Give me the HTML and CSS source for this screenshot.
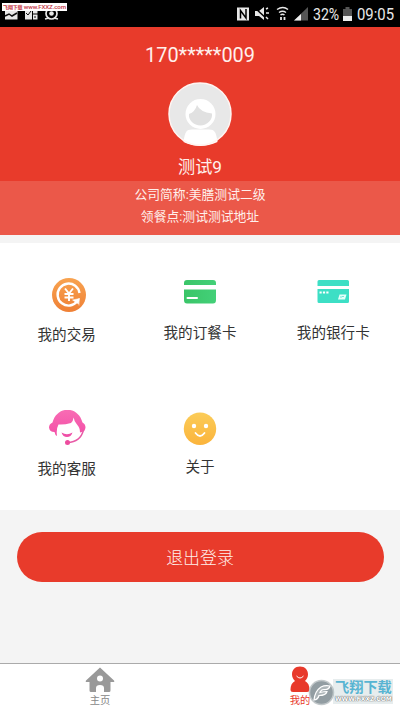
FILE: index.html
```html
<!DOCTYPE html>
<html lang="zh-CN">
<head>
<meta charset="utf-8">
<title>我的</title>
<link rel="stylesheet" href="styles.css">
</head>
<body>
<div class="screen">
  <div class="status">
    <svg class="notices" width="62" height="27" viewBox="0 0 62 27">
      <path d="M5 9h12.500v10.500H5z" fill="#e8e8e8"/><path d="M5 16l4-2 3 2 5-3" stroke="#111" stroke-width="1.500" fill="none"/>
      <path d="M25 9h7v10.500h-7zM33 9h4.500v4.500H33zM33 14.500h4.500v5H33z" fill="#e8e8e8"/><path d="M26 13l2 2 3-4M34 17h2" stroke="#111" fill="none"/>
      <circle cx="51.500" cy="13.500" r="5.500" fill="none" stroke="#e8e8e8" stroke-width="1.700"/><circle cx="51.500" cy="13.500" r="2.300" fill="#e8e8e8"/><path d="M45 19l4-1M58 19l-4-1" stroke="#e8e8e8" stroke-width="1.500"/>
    </svg>
    <div class="indicators">
      <svg width="76" height="27" viewBox="0 0 76 27">
        <path d="M1 7.500h12v13H1z" fill="#e8e8e8"/><path d="M4.500 18.500V10.500L10 18V9" fill="none" stroke="#000" stroke-width="1.500"/>
        <path d="M19 11h4l5-4v13l-5-4h-4z" fill="#e8e8e8"/><path d="M19 8l12 11" stroke="#000" stroke-width="1.500"/><path d="M30 9l2-1M30 13h3M30 17l2 2" stroke="#e8e8e8" stroke-width="1.500"/>
        <path d="M41 9.500q6-4 11 0M43 12.500q3.500-2.500 7 0M44.500 15q2-1.500 4 0" fill="none" stroke="#e8e8e8" stroke-width="1.500"/><path d="M45 17v3M48.500 17v3" stroke="#e8e8e8" stroke-width="1.800"/>
        <path d="M58 20.500L72 7v13.500z" fill="#555"/><path d="M58 20.500l7-6.500v6.500z" fill="#eee"/>
      </svg>
      <span class="percent">32%</span>
      <svg class="battery" width="9" height="14" viewBox="0 0 9 14"><path d="M2.500 0h4v2H9v12H0V2h2.500z" fill="#555"/><path d="M0 9h9v5H0z" fill="#eee"/></svg>
      <span class="clock">09:05</span>
    </div>
    <div class="source"><b>飞翔下载</b> www.FXXZ.com</div>
  </div>

  <header class="profile">
    <div class="phone">170*****009</div>
    <svg class="avatar" width="64" height="64" viewBox="0 0 64 64">
      <circle cx="32" cy="32" r="31" fill="#e8e8e8"/>
      <path d="M15.500 60C17 50 18 47.500 24 47.500h17c6 0 7 3 8.500 12.500Q32 68 15.500 60z" fill="#fff"/>
      <circle cx="32.500" cy="32" r="15" fill="#fff"/>
      <path d="M21 32q6-2 8-9 3 7 15 8.500c1 6-5 12-11.500 12S20 38 21 32z" fill="#e1e1e1"/>
      <circle cx="32" cy="32" r="31" fill="none" stroke="#fff5f2" stroke-width="1.500"/>
    </svg>
    <div class="name">测试9</div>
    <div class="details"><div>公司简称:美膳测试二级</div><div>领餐点:测试测试地址</div></div>
  </header>

  <main class="menu">
    <a class="item">
      <svg width="38" height="38" viewBox="0 0 38 38">
        <defs><linearGradient id="orange" x2="0" y2="1"><stop stop-color="#f8a350"/><stop offset="1" stop-color="#ef8035"/></linearGradient></defs>
        <circle cx="21" cy="19" r="17" fill="url(#orange)"/>
        <path d="M31.500 17A11 11 0 1 0 22 29.500q4-.5 7-4" fill="none" stroke="#fff" stroke-width="2.400"/><path d="M31 22v7.500M31.500 22.500l-7 1.500 6 4z" fill="#fff" stroke="#fff" stroke-width=".5"/>
        <path d="M17 12.500l4 5 4-5M21 17.500V25M16.500 18h9M16.500 21.500h9" fill="none" stroke="#fff" stroke-width="1.900"/>
      </svg>
      <span class="low">我的交易</span>
    </a>
    <a class="item">
      <svg width="38" height="38" viewBox="0 0 38 38">
        <defs><linearGradient id="green"><stop stop-color="#3ac568"/><stop offset="1" stop-color="#43d078"/></linearGradient></defs>
        <path d="M3 9V7q0-3 3-3h26q3 0 3 3v2zM3 13.500h32V24q0 3.500-3 3.500H6Q3 27.500 3 24z" fill="url(#green)"/><path d="M6.500 22H16" stroke="#fff" stroke-width="2" stroke-linecap="round"/>
      </svg>
      <span>我的订餐卡</span>
    </a>
    <a class="item">
      <svg width="38" height="38" viewBox="0 0 38 38">
        <path d="M3.500 10V5.500Q3.500 4 5 4h28.500q1.500 0 1.500 1.500V10zM3.500 13H35v12.500q0 1.500-1.500 1.500H5q-1.500 0-1.500-1.500z" fill="#3ddfc5"/>
        <path d="M5.500 16.500h9" stroke="#fff" stroke-width="2" stroke-dasharray="2.200 1.200"/><path d="M25.500 18.500h7l-1.500 5h-7z" fill="#e4fffa"/><path d="M26 21h2l1-1 1 1" stroke="#3ddfc5" stroke-width=".7" fill="none"/>
      </svg>
      <span>我的银行卡</span>
    </a>
    <a class="item">
      <svg width="38" height="38" viewBox="0 0 38 38">
        <defs><linearGradient id="pink" x2="0" y2="1"><stop stop-color="#f86cb4"/><stop offset="1" stop-color="#f34fa7"/></linearGradient></defs>
        <path d="M4.500 12.500C9-4.500 30-4.500 34.500 12.500q3 1.500 3 5-.5 4-3.500 4.500l-2 .5q0-5-3-8-3-3-3.300-7-.7 4-2.700 5.500-7 2-12.500 1.500Q8 19 9 26q-2-1-2.500-4-5 0-5.500-4.500 0-3.500 3.500-5z" fill="url(#pink)"/>
        <path d="M13.500 22.500q5.500 3.500 11 0-1.500 4.500-5.500 4.500t-5.500-4.500z" fill="#ef4fa7"/>
        <path d="M35.500 20q-3 12-16 12.500" stroke="#e85aa6" stroke-width="1.400" fill="none"/><circle cx="19.500" cy="32.500" r="2.500" fill="#ed4c9f"/>
      </svg>
      <span class="low">我的客服</span>
    </a>
    <a class="item">
      <svg width="38" height="38" viewBox="0 0 38 38">
        <defs><linearGradient id="yellow" x2="0" y2="1"><stop stop-color="#fbcc58"/><stop offset="1" stop-color="#fbb43c"/></linearGradient></defs>
        <circle cx="19" cy="18.700" r="16.200" fill="url(#yellow)"/><circle cx="13" cy="16" r="2.200" fill="#fff"/><circle cx="25" cy="16" r="2.200" fill="#fff"/><path d="M14.500 23q4.500 6 9 0" fill="none" stroke="#fff" stroke-width="1.800" stroke-linecap="round"/>
      </svg>
      <span>关于</span>
    </a>
  </main>

  <div class="actions"><button class="logout">退出登录</button></div>

  <nav class="tabs">
    <a class="tab">
      <svg width="30" height="28" viewBox="0 0 30 28"><path d="M15 2.500L29 15.500q1 1.500-1 1.500h-2.500v8.500q0 1.500-1.500 1.500H19v-4q0-3-4-3t-4 3v4H6q-1.500 0-1.500-1.500V17H2q-2 0-1-1.500z" fill="#999"/><circle cx="15" cy="13.500" r="3" fill="#fff"/></svg>
      <span>主页</span>
    </a>
    <a class="tab active">
      <svg width="30" height="28" viewBox="0 0 30 28"><path d="M15 1.500c5 0 8 3.500 8 8 0 3-1.500 5-3 6.500 3 1.500 4.500 4.500 4.500 8.500q0 2.500-2.500 2.500h-14q-2.500 0-2.500-2.500c0-4 1.500-7 4.500-8.500C8.500 14.500 7 12.500 7 9.500c0-4.500 3-8 8-8z" fill="#e8392b"/><path d="M11.500 11q3.500 4 7 0" fill="none" stroke="#fff" stroke-width="1"/></svg>
      <span>我的</span>
    </a>
  </nav>

  <div class="watermark">
    <svg width="27" height="27" viewBox="0 0 27 27"><circle cx="13.500" cy="13.500" r="12" fill="#929da2" stroke="#c2c8ca" stroke-width="1.500"/><path d="M6 21q1-9 7-13 4-2 9-1-1 4-6 3.500-3 0-4 3 4-1 7-1-1 4-8 4-1 4-5 4.500z" fill="#aeb6b9" stroke="#fff" stroke-width="1.200"/></svg>
    <div class="wordmark"><strong>飞翔下载</strong><small>WWW.FXXZ.COM</small></div>
  </div>
</div>
</body>
</html>
```
FILE: styles.css
```css
* { box-sizing: border-box; }
body { margin: 0; font-family: Roboto, "Noto Sans CJK SC", sans-serif; }
.screen { position: relative; width: 400px; height: 711px; display: flex; flex-direction: column; background: #f4f4f4; overflow: hidden; }

.status { position: relative; height: 27px; flex: none; display: flex; justify-content: space-between; background: #000; color: #e8e8e8; }
.indicators { display: flex; align-items: center; padding-right: 5px; font-size: 16px; line-height: 27px; }
.percent { width: 27px; margin-left: 1px; transform: scaleX(.88); transform-origin: left; padding-top: 1px; }
.battery { margin: 0 5px 0 3px; }
.clock { width: 38px; padding-top: 1px; transform: scaleX(.93); transform-origin: left; }
.source { position: absolute; left: 2px; top: 3px; width: 65px; height: 8px; background: #fff; color: #c43545; font-size: 6.2px; line-height: 8px; white-space: nowrap; text-align: center; font-weight: 500; letter-spacing: -.15px; }
.source b { font-size: 5px; }

.profile { height: 208px; flex: none; display: flex; flex-direction: column; align-items: center; background: #e83b2b; color: #fff0ec; }
.phone { height: 55px; padding-top: 16px; font-size: 19.9px; line-height: 25px; }
.avatar { flex: none; }
.name { height: 35px; padding-top: 9px; font-size: 17.2px; line-height: 25px; }
.details { width: 100%; height: 54px; padding-top: 3px; background: #eb5849; font-size: 12.8px; line-height: 21.5px; text-align: center; }

.menu { height: 267px; flex: none; margin-top: 8px; background: #fff; display: grid; grid-template-columns: repeat(3, 1fr); grid-template-rows: 134px 133px; }
.item { display: flex; flex-direction: column; align-items: center; padding-top: 33px; color: #333; font-size: 14.6px; line-height: 22px; }
.item svg { flex: none; }
.item span { margin-top: 8px; }
.item .low { margin-top: 10px; }

.actions { height: 153px; flex: none; padding: 22px 16.5px 0; }
.logout { display: block; width: 100%; height: 50px; border: 0; border-radius: 25px; background: #e83b2b; color: #fff0ec; font: 300 16.9px/50px "Noto Sans CJK SC", sans-serif; padding: 0; }

.tabs { flex: 1; display: flex; background: #fff; border-top: 1px solid #aaa; }
.tab { flex: 1; display: flex; flex-direction: column; align-items: center; padding-top: 1px; color: #888; font-size: 10.3px; line-height: 16px; }
.tab.active { color: #e8392b; }

.watermark { position: absolute; left: 308px; top: 679px; display: flex; }
.wordmark { width: 60px; height: 25px; margin-left: -2px; padding-left: 2px; background: rgba(170, 190, 195, .28); }
.wordmark strong { display: block; color: #57b4d2; font-size: 14.2px; font-weight: 700; line-height: 16px; white-space: nowrap; }
.wordmark small { display: block; color: #fff; font: 700 6.1px/8px "DejaVu Sans", sans-serif; text-shadow: 0 0 1px #555, 0 0 1px #555; white-space: nowrap; letter-spacing: -.1px; }
```
